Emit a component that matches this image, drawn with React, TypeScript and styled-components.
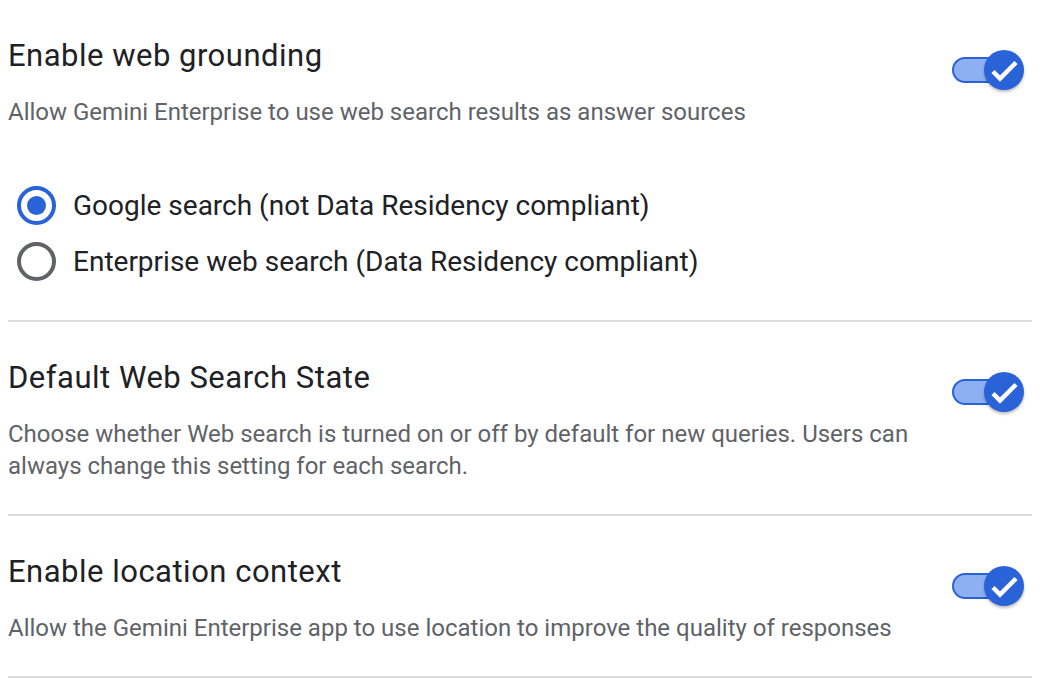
import React, { useState } from 'react';
import styled, { createGlobalStyle } from 'styled-components';

const GlobalStyle = createGlobalStyle`
  body {
    margin: 0;
    background: #ffffff;
    font-family: Roboto, 'Noto Sans', sans-serif;
  }
`;

const Page = styled.div`
  width: 1024px;
  padding: 0 0 0 8px;
`;

const Section = styled.section<{ $bottom: number }>`
  display: flex;
  align-items: flex-start;
  justify-content: space-between;
  padding: 38px 0 ${p => p.$bottom}px;
  border-bottom: 2px solid #dadce0;
`;

const Body = styled.div`
  display: flex;
  flex-direction: column;
`;

const Title = styled.h2`
  margin: 0;
  font-size: 31px;
  line-height: 36px;
  letter-spacing: 0.5px;
  font-weight: 400;
  color: #202124;
`;

const Description = styled.p`
  margin: 22px 0 0;
  max-width: 920px;
  font-size: 24px;
  line-height: 32px;
  color: #5f6368;
`;

const RadioGroup = styled.div`
  display: flex;
  flex-direction: column;
  gap: 16px;
  margin-top: 57px;
`;

const RadioRow = styled.label`
  display: flex;
  align-items: center;
  gap: 17px;
  height: 40px;
  padding-left: 9px;
  font-size: 28px;
  color: #202124;
  cursor: pointer;
`;

const RadioCircle = styled.span<{ $checked: boolean }>`
  box-sizing: border-box;
  width: 39px;
  height: 39px;
  border-radius: 50%;
  border: 4px solid ${p => (p.$checked ? '#2a62d8' : '#5f6368')};
  display: flex;
  align-items: center;
  justify-content: center;
  &::after {
    content: '';
    width: 19px;
    height: 19px;
    border-radius: 50%;
    background: #2a62d8;
    display: ${p => (p.$checked ? 'block' : 'none')};
  }
`;

const Toggle = styled.button`
  position: relative;
  flex: none;
  width: 74px;
  height: 40px;
  margin: 12px 8px 0 0;
  padding: 0;
  border: none;
  background: transparent;
  cursor: pointer;
`;

const Track = styled.span`
  position: absolute;
  left: 2px;
  top: 7px;
  box-sizing: border-box;
  width: 66px;
  height: 26px;
  border-radius: 13px;
  background: #8db0f3;
  border: 2px solid #2a62d8;
`;

const Thumb = styled.span`
  position: absolute;
  right: 0;
  top: 0;
  width: 40px;
  height: 40px;
  border-radius: 50%;
  background: #2a62d8;
  box-shadow: 0 2px 3px rgba(0, 0, 0, 0.25);
`;

const Check = () => (
  <svg width="40" height="40" viewBox="0 0 40 40">
    <path d="M9 21.5l7 7L32 12.5" fill="none" stroke="#fff" strokeWidth="4.5" />
  </svg>
);

const Switch = () => (
  <Toggle aria-pressed="true">
    <Track />
    <Thumb>
      <Check />
    </Thumb>
  </Toggle>
);

export default function App() {
  const [source, setSource] = useState('google');
  return (
    <Page>
      <GlobalStyle />
      <Section $bottom={39}>
        <Body>
          <Title>Enable web grounding</Title>
          <Description>Allow Gemini Enterprise to use web search results as answer sources</Description>
          <RadioGroup>
            <RadioRow onClick={() => setSource('google')}>
              <RadioCircle $checked={source === 'google'} />
              Google search (not Data Residency compliant)
            </RadioRow>
            <RadioRow onClick={() => setSource('enterprise')}>
              <RadioCircle $checked={source === 'enterprise'} />
              Enterprise web search (Data Residency compliant)
            </RadioRow>
          </RadioGroup>
        </Body>
        <Switch />
      </Section>
      <Section $bottom={32}>
        <Body>
          <Title>Default Web Search State</Title>
          <Description>
            Choose whether Web search is turned on or off by default for new queries. Users can always change this
            setting for each search.
          </Description>
        </Body>
        <Switch />
      </Section>
      <Section $bottom={32}>
        <Body>
          <Title>Enable location context</Title>
          <Description>Allow the Gemini Enterprise app to use location to improve the quality of responses</Description>
        </Body>
        <Switch />
      </Section>
    </Page>
  );
}
